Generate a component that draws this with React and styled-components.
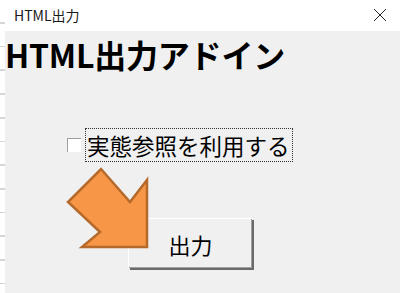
import React from 'react';
import styled, { createGlobalStyle } from 'styled-components';

const Global = createGlobalStyle`
  html, body { margin: 0; padding: 0; background: #ffffff; }
  body { font-family: "Noto Sans CJK JP", "Noto Sans", sans-serif; }
`;

const Screen = styled.div`
  display: flex;
  width: 400px;
  height: 293px;
  overflow: hidden;
`;

const SheetEdge = styled.div`
  width: 5px;
  flex-shrink: 0;
  background: repeating-linear-gradient(
    to bottom,
    #ffffff 0px,
    #ffffff 22px,
    #d6d6d6 22px,
    #d6d6d6 23.7px
  );
`;

const Dialog = styled.div`
  flex: 1;
  display: flex;
  flex-direction: column;
`;

const TitleBar = styled.div`
  height: 31px;
  background: #ffffff;
  display: flex;
  align-items: center;
  justify-content: space-between;
  padding: 0 12px 2px 9px;
  box-sizing: border-box;
`;

const TitleText = styled.span`
  font-size: 14px;
  color: #1a1a1a;
`;

const CloseButton = styled.div`
  width: 16px;
  height: 16px;
  display: flex;
  align-items: center;
  justify-content: center;
`;

const Body = styled.div`
  position: relative;
  flex: 1;
  background: #f0f0f0;
  display: flex;
  flex-direction: column;
  align-items: flex-start;
`;

const Heading = styled.h1`
  margin: 5px 0 0 0;
  font-size: 32px;
  line-height: 36px;
  font-weight: 700;
  color: #000000;
  letter-spacing: -0.2px;
`;

const CheckRow = styled.label`
  margin: 56px 0 0 62px;
  display: flex;
  align-items: center;
  gap: 4px;
`;

const Box = styled.span`
  width: 14px;
  height: 14px;
  background: #ffffff;
  border-top: 1px solid #a0a0a0;
  border-left: 1px solid #a0a0a0;
  box-sizing: border-box;
`;

const Label = styled.span`
  font-size: 22.5px;
  line-height: 32px;
  border: 1px dotted #333333;
  padding: 0 2px 0 1px;
  color: #000000;
`;

const OutputButton = styled.button`
  margin: 56px 0 0 123px;
  width: 124px;
  height: 50px;
  background: #f0f0f0;
  border: none;
  border-top: 1px solid #ffffff;
  border-left: 1px solid #ffffff;
  box-shadow: 2px 2px 0 #6a6a6a, inset -1px -1px 0 #a0a0a0;
  font-family: "Noto Sans CJK JP", sans-serif;
  font-size: 22px;
  color: #000000;
  padding: 0;
`;

const Arrow = styled.svg`
  position: absolute;
  left: 61px;
  top: 136px;
`;

export default function App() {
  return (
    <Screen>
      <Global />
      <SheetEdge />
      <Dialog>
        <TitleBar>
          <TitleText>HTML出力</TitleText>
          <CloseButton>
            <svg width="14" height="14" viewBox="0 0 14 14">
              <path d="M1 1 L13 13 M13 1 L1 13" stroke="#222" strokeWidth="1" fill="none" />
            </svg>
          </CloseButton>
        </TitleBar>
        <Body>
          <Heading>HTML出力アドイン</Heading>
          <CheckRow>
            <Box />
            <Label>実態参照を利用する</Label>
          </CheckRow>
          <OutputButton>出力</OutputButton>
          <Arrow width="86" height="84" viewBox="0 0 86 84">
            <polygon
              points="35,2 64,35 81,13 81,80 16,80 34,65 2,35"
              fill="#f79646"
              stroke="#b5692b"
              strokeWidth="2.5"
              strokeLinejoin="miter"
            />
          </Arrow>
        </Body>
      </Dialog>
    </Screen>
  );
}
